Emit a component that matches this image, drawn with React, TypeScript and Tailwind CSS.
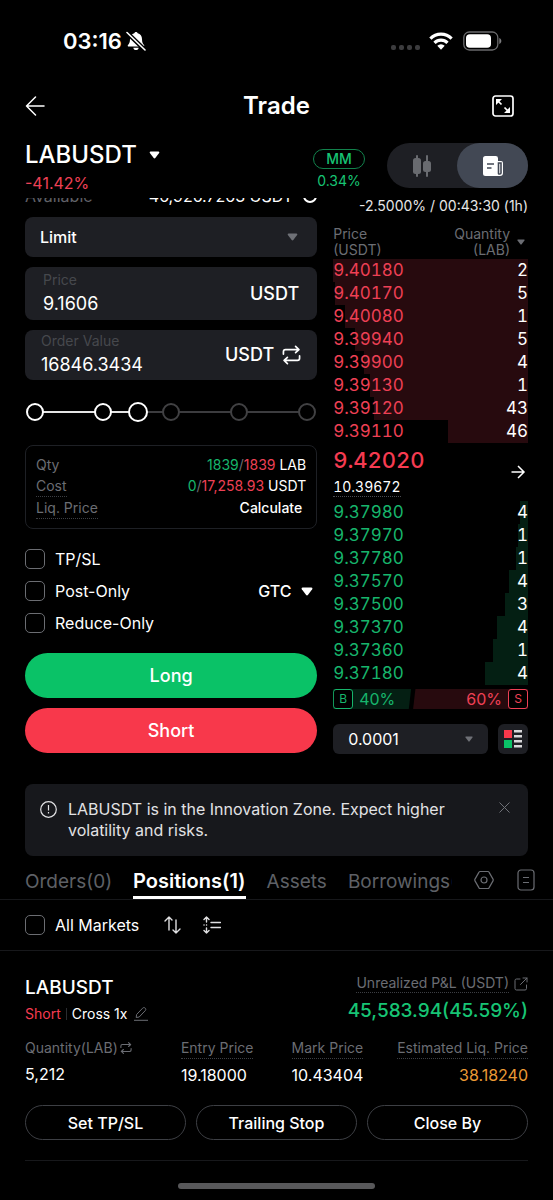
import React, { useState } from 'react';
import clsx from 'clsx';

interface Level {
  price: string;
  qty: number;
  depth: number;
}

const asks: Level[] = [
  { price: '9.40180', qty: 2, depth: 100 },
  { price: '9.40170', qty: 5, depth: 99 },
  { price: '9.40080', qty: 1, depth: 94 },
  { price: '9.39940', qty: 5, depth: 89 },
  { price: '9.39900', qty: 4, depth: 84 },
  { price: '9.39130', qty: 1, depth: 81 },
  { price: '9.39120', qty: 43, depth: 79 },
  { price: '9.39110', qty: 46, depth: 41 },
];

const bids: Level[] = [
  { price: '9.37980', qty: 4, depth: 4 },
  { price: '9.37970', qty: 1, depth: 5 },
  { price: '9.37780', qty: 1, depth: 6 },
  { price: '9.37570', qty: 4, depth: 10 },
  { price: '9.37500', qty: 3, depth: 12 },
  { price: '9.37370', qty: 4, depth: 16 },
  { price: '9.37360', qty: 1, depth: 18 },
  { price: '9.37180', qty: 4, depth: 22 },
];

const sliderStops = [0, 25, 50, 75, 100];

const Caret = ({ className }: { className?: string }) => (
  <svg viewBox="0 0 12 9" className={clsx('shrink-0 fill-current', className)} aria-hidden="true">
    <path d="M1.6.6h8.8c.9 0 1.3 1 .8 1.7L6.9 8c-.5.6-1.3.6-1.8 0L.8 2.3C.3 1.6.7.6 1.6.6z" />
  </svg>
);

const SwapIcon = ({ className }: { className?: string }) => (
  <svg viewBox="0 0 20 20" className={clsx('shrink-0', className)} fill="none" stroke="currentColor" strokeWidth="1.8" strokeLinecap="round" strokeLinejoin="round" aria-hidden="true">
    <path d="M1.5 9V6.5a2.2 2.2 0 0 1 2.2-2.2H17.5M14.3 1l3.5 3.3-3.5 3.2" />
    <path d="M18.5 11v2.5a2.2 2.2 0 0 1-2.2 2.2H2.5M5.7 12.5l-3.5 3.2L5.7 19" />
  </svg>
);

const StatusBar = () => (
  <div className="flex h-[82px] items-center justify-between pl-[63px] pr-[51px]">
    <div className="flex items-center gap-1">
      <span className="text-[22px] leading-7 font-semibold">03:16</span>
      <svg viewBox="0 0 20 20" className="size-5" aria-hidden="true">
        <path fill="#fff" d="M10 1c.9 0 1.5.6 1.7 1.3 2.7.7 4.3 2.9 4.3 5.7 0 3.5.8 4.700 2 5.900.6.700.2 1.700-.7 1.700H2.700c-.9 0-1.300-1-.7-1.700C3.200 12.700 4 11.500 4 8c0-2.800 1.600-5 4.300-5.700C8.500 1.600 9.100 1 10 1zM7.300 16.800h5.400c-.2 1.400-1.300 2.300-2.700 2.300s-2.500-.9-2.700-2.300z" />
        <path stroke="#000" strokeWidth="4.4" d="M0 0.700 20 20" />
        <path stroke="#fff" strokeWidth="1.6" strokeLinecap="round" d="M1 1.500 19 19" />
      </svg>
    </div>
    <div className="flex items-center">
      <div className="mt-3 flex gap-[3px]">
        {[0, 1, 2, 3].map((i) => (
          <span key={i} className="size-[5px] rounded-[2px] bg-[#3c3c3e]" />
        ))}
      </div>
      <svg viewBox="0 0 24 18" className="ml-[9px] h-[18px] w-6" aria-hidden="true">
        <g fill="none" stroke="#fff" strokeWidth="3.2">
          <path d="M1.400 6.600a15 15 0 0 1 21.200 0" />
          <path d="M5.500 10.800a9.200 9.200 0 0 1 13 0" />
        </g>
        <path fill="#fff" d="M8.300 13.800a5.300 5.300 0 0 1 7.400 0L12 17.700z" />
      </svg>
      <svg viewBox="0 0 39 20" className="ml-[10px] h-5 w-[39px]" aria-hidden="true">
        <rect x=".8" y="1" width="34" height="18" rx="5.5" fill="none" stroke="#6a6a6c" strokeWidth="1.3" />
        <rect x="3" y="3.2" width="25" height="13.6" rx="3.8" fill="#fff" />
        <path fill="#7d7d7f" d="M36.300 7c1.300.6 2 1.700 2 3s-.7 2.400-2 3z" />
      </svg>
    </div>
  </div>
);

const BookRow = ({ level, side }: { level: Level; side: 'ask' | 'bid' }) => (
  <li className="relative flex h-[23px] items-center justify-between">
    <span
      className={clsx('absolute inset-y-0 right-0', side === 'ask' ? 'bg-[#270a0e]' : 'bg-[#041f13]')}
      style={{ width: `${level.depth}%` }}
    />
    <span className={clsx('relative', side === 'ask' ? 'text-[#ee4055]' : 'text-[#17b56c]')}>{level.price}</span>
    <span className="relative text-white">{level.qty}</span>
  </li>
);

const CheckOption = ({ id, label }: { id: string; label: string }) => (
  <div className="flex items-center gap-[10px]">
    <input
      id={id}
      type="checkbox"
      className="size-5 shrink-0 appearance-none rounded-[5px] border border-[#6b6d72] checked:bg-[#0ac267]"
    />
    <label htmlFor={id} className="text-base leading-5">{label}</label>
  </div>
);

const OrderForm = () => {
  const [price, setPrice] = useState('9.1606');
  const [value, setValue] = useState('16846.3434');
  const [percent, setPercent] = useState(38);

  return (
    <div className="min-w-0">
      {/* Balance row, scrolled half way under the header */}
      <div className="h-[19px] overflow-hidden">
        <div className="-mt-3 flex justify-between text-base leading-5">
          <span className="text-[#606268]">Available</span>
          <span className="flex items-center gap-[10px]">
            46,926.7263 USDT
            <span className="size-[14px] rounded-full border-2 border-white" />
          </span>
        </div>
      </div>

      <div className="relative text-[#6e7076]">
        <select
          aria-label="Order type"
          className="block h-10 w-full appearance-none rounded-lg bg-[#1e1f24] px-[15px] text-base font-medium text-white"
        >
          <option>Limit</option>
          <option>Market</option>
        </select>
        <Caret className="pointer-events-none absolute top-4 right-[19px] h-2 w-[11px]" />
      </div>

      <div className="mt-[10px] flex h-[53px] items-center justify-between rounded-lg bg-[#1e1f24] px-[18px]">
        <div className="min-w-0 flex-1">
          <label htmlFor="price" className="block text-sm leading-5 text-[#46484d]">Price</label>
          <input
            id="price"
            value={price}
            onChange={(e) => setPrice(e.target.value)}
            className="block h-7 w-full bg-transparent text-lg outline-none"
          />
        </div>
        <span className="text-lg font-medium">USDT</span>
      </div>

      <div className="mt-[10px] flex h-[50px] items-center justify-between rounded-lg bg-[#1e1f24] px-4">
        <div className="min-w-0 flex-1">
          <label htmlFor="value" className="block text-sm leading-5 text-[#46484d]">Order Value</label>
          <input
            id="value"
            value={value}
            onChange={(e) => setValue(e.target.value)}
            className="block h-7 w-full bg-transparent text-lg outline-none"
          />
        </div>
        <button type="button" className="flex items-center gap-2 text-lg font-medium">
          USDT
          <SwapIcon className="h-5 w-[19px]" />
        </button>
      </div>

      <div className="relative mx-[10px] mt-[22px] flex h-5 items-center">
        <div className="h-[2px] w-full bg-[#3c3c3f]">
          <div className="h-full bg-[#e4e4e4]" style={{ width: `${percent}%` }} />
        </div>
        {sliderStops.map((stop) => (
          <span
            key={stop}
            className={clsx(
              'absolute size-[18px] -translate-x-1/2 rounded-full border-2 bg-black',
              stop <= percent ? 'border-white' : 'border-[#414143]'
            )}
            style={{ left: `${stop}%` }}
          />
        ))}
        <span
          className="absolute size-5 -translate-x-1/2 rounded-full border-2 border-white bg-black"
          style={{ left: `${percent}%` }}
        />
        <input
          type="range"
          aria-label="Order size"
          min={0}
          max={100}
          value={percent}
          onChange={(e) => setPercent(Number(e.target.value))}
          className="absolute inset-0 w-full cursor-pointer opacity-0"
        />
      </div>

      <dl className="mt-[23px] flex h-[84px] flex-col justify-between rounded-lg border border-[#1e2025] px-[10px] py-[9px] text-sm leading-5">
        <div className="flex justify-between">
          <dt className="text-[#6b6d73]">Qty</dt>
          <dd className="text-[#6b6d73]">
            <span className="text-[#17b56c]">1839</span>/<span className="text-[#ee4055]">1839</span>
            <span className="text-white"> LAB</span>
          </dd>
        </div>
        <div className="flex justify-between">
          <dt className="border-b border-dotted border-[#3c3e43] text-[#6b6d73]">Cost</dt>
          <dd className="text-[#6b6d73]">
            <span className="text-[#17b56c]">0</span>/<span className="text-[#ee4055]">17,258.93</span>
            <span className="text-white"> USDT</span>
          </dd>
        </div>
        <div className="flex justify-between">
          <dt className="border-b border-dotted border-[#3c3e43] text-[#6b6d73]">Liq. Price</dt>
          <dd className="pr-1">
            <button type="button" className="font-medium">Calculate</button>
          </dd>
        </div>
      </dl>

      <div className="mt-5 flex flex-col gap-3">
        <CheckOption id="tpsl" label="TP/SL" />
        <div className="flex items-center justify-between">
          <CheckOption id="post" label="Post-Only" />
          <div className="relative">
            <select aria-label="Time in force" className="block h-5 appearance-none pr-[25px] text-base leading-5 font-medium">
              <option>GTC</option>
              <option>IOC</option>
              <option>FOK</option>
            </select>
            <Caret className="pointer-events-none absolute top-[6px] right-1 h-[9px] w-3" />
          </div>
        </div>
        <CheckOption id="reduce" label="Reduce-Only" />
      </div>

      <button type="button" className="mt-5 block h-[45px] w-full rounded-full bg-[#0ac267] text-lg font-medium">
        Long
      </button>
      <button type="button" className="mt-[10px] block h-[45px] w-full rounded-full bg-[#f8384b] text-lg font-medium">
        Short
      </button>
    </div>
  );
};

const OrderBook = () => (
  <div className="min-w-0">
    <p className="text-right text-sm leading-4 whitespace-nowrap text-[#e6e6e6]">-2.5000% / 00:43:30 (1h)</p>

    <div className="mt-3 flex items-center justify-between text-sm leading-4 text-[#6b6d73]">
      <span>Price<br />(USDT)</span>
      <span className="flex items-center gap-[7px] text-right">
        <span>Quantity<br />(LAB)</span>
        <Caret className="mr-[3px] h-[6px] w-2" />
      </span>
    </div>

    <ul className="mt-px text-[17px] tabular-nums">
      {asks.map((level) => (
        <BookRow key={level.price} level={level} side="ask" />
      ))}
    </ul>

    <div className="flex h-[58px] items-center justify-between">
      <div className="tabular-nums">
        <div className="text-[22px] leading-7 font-medium text-[#f63b51]">9.42020</div>
        <div className="inline-block border-b border-dotted border-[#4a4c52] text-sm leading-[18px]">10.39672</div>
      </div>
      <svg viewBox="0 0 16 16" className="mr-[2px] size-4" fill="none" stroke="#fff" strokeWidth="1.5" aria-hidden="true">
        <path d="M1.500 8h12M8 2l6 6-6 6" />
      </svg>
    </div>

    <ul className="text-[17px] tabular-nums">
      {bids.map((level) => (
        <BookRow key={level.price} level={level} side="bid" />
      ))}
    </ul>

    <div className="mt-1 flex h-5 gap-[2px] text-base leading-5">
      <div className="flex w-[40%] gap-[6px] bg-[#041f13] text-[#17b56c] [clip-path:polygon(0_0,100%_0,97%_100%,0_100%)]">
        <span className="flex size-5 items-center justify-center rounded-[3px] border border-[#17b56c] bg-black text-xs">B</span>
        40%
      </div>
      <div className="flex flex-1 justify-end gap-[6px] bg-[#270a0e] text-[#ee4055] [clip-path:polygon(2%_0,100%_0,100%_100%,0_100%)]">
        60%
        <span className="flex size-5 items-center justify-center rounded-[3px] border border-[#ee4055] bg-black text-xs">S</span>
      </div>
    </div>

    <div className="mt-[15px] flex gap-[10px]">
      <div className="relative min-w-0 flex-1 text-[#6e7076]">
        <select
          aria-label="Price grouping"
          className="block h-[30px] w-full appearance-none rounded-md bg-[#1e1f24] px-[15px] text-base text-white"
        >
          <option>0.0001</option>
          <option>0.001</option>
        </select>
        <Caret className="pointer-events-none absolute top-3 right-[14px] h-[6px] w-[10px]" />
      </div>
      <button type="button" aria-label="Book layout" className="flex h-[30px] w-[30px] items-center justify-center rounded-md bg-[#1e1f24]">
        <svg viewBox="0 0 18 18" className="size-[18px]" aria-hidden="true">
          <path fill="#f8384b" d="M0 0h8v8H0z" />
          <path fill="#0ac267" d="M0 10h8v8H0z" />
          <path fill="#d8d8da" d="M10 0h8v2.500h-8zM10 5h8v2.500h-8zM10 10h8v2.500h-8zM10 15h8v2.500h-8z" />
        </svg>
      </button>
    </div>
  </div>
);

const Position = () => (
  <section className="mx-[25px] border-b border-[#17181b] pt-[23px] pb-5">
    <div className="flex justify-between">
      <div>
        <h2 className="text-[19px] leading-7 font-medium">LABUSDT</h2>
        <div className="flex items-center text-sm leading-6">
          <span className="text-[#f63b51]">Short</span>
          <span className="mx-[5px] h-3 w-px bg-[#2a2c30]" />
          <span>Cross 1x</span>
          <button type="button" aria-label="Adjust leverage" className="ml-[7px]">
            <svg viewBox="0 0 14 14" className="size-[14px]" fill="none" stroke="#6b6d73" strokeLinejoin="round" aria-hidden="true">
              <path d="M2.200 10.500l.4-3 6-6.300c.8-.8 1.800-.8 2.600-.1.800.8.8 1.800 0 2.600L5.200 10z" />
              <path d="M0 13.300h14" />
            </svg>
          </button>
        </div>
      </div>
      <div className="flex flex-col items-end">
        <div className="flex items-center gap-[5px] text-sm text-[#6b6d73]">
          <span className="border-b border-dotted border-[#3c3e43] leading-[18px]">Unrealized P&amp;L (USDT)</span>
          <svg viewBox="0 0 14 14" className="size-[14px]" fill="none" stroke="currentColor" strokeLinecap="round" strokeLinejoin="round" aria-hidden="true">
            <path d="M6 2H2.500A1.500 1.500 0 0 0 1 3.500v8A1.500 1.500 0 0 0 2.500 13h8.500a1.500 1.500 0 0 0 1.500-1.500V8M9 1h4v4M13 1 6.500 7.500" />
          </svg>
        </div>
        <div className="mt-1 text-[19px] leading-7 font-medium text-[#17c474]">45,583.94(45.59%)</div>
      </div>
    </div>

    <dl className="mt-3 grid grid-cols-[31%_22%_1fr_auto]">
      <div>
        <dt className="flex items-center gap-[2px] text-sm leading-5 text-[#6b6d73]">
          Quantity(LAB)
          <SwapIcon className="size-3" />
        </dt>
        <dd className="mt-1 text-base leading-6">5,212</dd>
      </div>
      <div className="justify-self-start">
        <dt className="border-b border-dotted border-[#3c3e43] text-sm leading-5 text-[#6b6d73]">Entry Price</dt>
        <dd className="mt-1 text-base leading-6">19.18000</dd>
      </div>
      <div className="justify-self-start">
        <dt className="border-b border-dotted border-[#3c3e43] text-sm leading-5 text-[#6b6d73]">Mark Price</dt>
        <dd className="mt-1 text-base leading-6">10.43404</dd>
      </div>
      <div className="text-right">
        <dt className="border-b border-dotted border-[#3c3e43] text-sm leading-5 text-[#6b6d73]">Estimated Liq. Price</dt>
        <dd className="mt-1 text-base leading-6 text-[#eb9a35]">38.18240</dd>
      </div>
    </dl>

    <div className="mt-[18px] grid grid-cols-3 gap-[10px]">
      {['Set TP/SL', 'Trailing Stop', 'Close By'].map((action) => (
        <button key={action} type="button" className="h-[35px] rounded-full border border-[#3d3f44] text-base font-medium">
          {action}
        </button>
      ))}
    </div>
  </section>
);

const App: React.FC = () => {
  return (
    <main className="min-h-screen overflow-hidden bg-black font-['Inter',sans-serif] text-white">
      <StatusBar />

      <header className="grid grid-cols-3 items-center px-[25px]">
        <button type="button" aria-label="Back" className="justify-self-start">
          <svg viewBox="0 0 20 20" className="size-5" fill="none" stroke="#fff" strokeWidth="1.5" strokeLinecap="round" strokeLinejoin="round" aria-hidden="true">
            <path d="M19 10H1.500M10.500 1 1.500 10l9 9" />
          </svg>
        </button>
        <h1 className="text-center text-2xl leading-[47px] font-semibold">Trade</h1>
        <button type="button" aria-label="Full screen" className="mr-[14px] justify-self-end">
          <svg viewBox="0 0 22 22" className="size-[22px]" fill="none" stroke="#fff" strokeWidth="1.7" aria-hidden="true">
            <rect x="1" y="1" width="20" height="20" rx="2.5" />
            <path d="M5 5l4.500 4.500M17 17l-4.500-4.500" />
            <path fill="#fff" stroke="none" d="M4 4h6L4 10zM18 18h-6l6-6z" />
          </svg>
        </button>
      </header>

      <div className="mt-[11px] flex items-start justify-between px-[25px]">
        <div>
          <button type="button" className="flex items-center gap-3 text-2xl leading-[30px] font-medium">
            LABUSDT
            <Caret className="h-2 w-[11px]" />
          </button>
          <div className="h-[28px] text-base leading-[26px] text-[#ee4055]">-41.42%</div>
        </div>
        <div className="flex items-start gap-[22px] pt-[3px]">
          <div className="mt-[6px] flex flex-col items-center">
            <span className="flex h-5 w-[52px] items-center justify-center rounded-full border border-[#12824c] text-sm font-medium text-[#17c474]">MM</span>
            <span className="text-sm leading-[23px] text-[#17c474]">0.34%</span>
          </div>
          <div className="flex rounded-full bg-[#1e1f24]">
            <button type="button" aria-label="Chart" className="flex h-[45px] w-[70px] items-center justify-center">
              <svg viewBox="0 0 18 22" className="h-[22px] w-[18px]" fill="#696b70" aria-hidden="true">
                <rect x="0" y="3" width="8" height="16" rx="2.5" />
                <rect x="3" y="0" width="2" height="22" rx="1" />
                <rect x="10" y="6" width="8" height="11" rx="2.5" />
                <rect x="13" y="0" width="2" height="22" rx="1" />
              </svg>
            </button>
            <button type="button" aria-label="Trade panel" className="flex h-[45px] w-[71px] items-center justify-center rounded-full bg-[#424854]">
              <svg viewBox="0 0 20 20" className="size-5" aria-hidden="true">
                <path fill="#fff" d="M2.500 0h10.200A2.300 2.300 0 0 1 15 2.300V5h3a2 2 0 0 1 2 2v10a3 3 0 0 1-3 3H2.500A2.500 2.500 0 0 1 0 17.500v-15A2.500 2.500 0 0 1 2.500 0z" />
                <path fill="none" stroke="#424854" strokeWidth="1.6" d="M4 8h7M4 12h4.500M15.500 7v10.500c0 .8 2.500.8 2.500-.5V7z" />
              </svg>
            </button>
          </div>
        </div>
      </div>

      <div className="grid grid-cols-[3fr_2fr] gap-4 px-[25px]">
        <OrderForm />
        <OrderBook />
      </div>

      <div role="status" className="mx-[25px] mt-[30px] flex items-start rounded-lg bg-[#17181c] px-[15px] py-[15px]">
        <svg viewBox="0 0 17 17" className="mt-[2px] size-[17px] shrink-0" fill="none" stroke="#e2e2e4" strokeWidth="1.2" aria-hidden="true">
          <circle cx="8.5" cy="8.5" r="7.8" />
          <path d="M8.500 4v5.500M8.500 11v1.600" />
        </svg>
        <p className="mx-[11px] flex-1 text-base leading-[21px] text-[#e2e2e4]">
          LABUSDT is in the Innovation Zone. Expect higher volatility and risks.
        </p>
        <button type="button" aria-label="Dismiss" className="mt-[3px] mr-[3px]">
          <svg viewBox="0 0 11 11" className="size-[11px]" stroke="#707278" aria-hidden="true">
            <path d="M.5.5l10 10M10.500.5l-10 10" />
          </svg>
        </button>
      </div>

      <div className="mt-[5px] flex items-center border-b border-[#17181b] pr-[18px] pl-[25px]">
        <nav className="flex min-w-0 flex-1 gap-[21px] overflow-hidden text-[19px] text-[#5e6066]">
          <a href="#orders" className="pt-[5px] leading-8">Orders(0)</a>
          <a href="#positions" aria-current="page" className="border-b-3 border-white pt-[5px] text-xl leading-[30px] font-semibold text-white">Positions(1)</a>
          <a href="#assets" className="pt-[5px] leading-8">Assets</a>
          <a href="#borrowings" className="pt-[5px] leading-8">Borrowings(0)</a>
        </nav>
        <button type="button" aria-label="Settings" className="ml-[22px]">
          <svg viewBox="0 0 20 20" className="size-5" fill="none" stroke="#6b6d73" strokeWidth="1.2" strokeLinejoin="round" aria-hidden="true">
            <path d="M6 1.500h8c.5 0 .8.2 1 .6l4 7c.3.600.3 1.200 0 1.800l-4 7c-.2.400-.5.600-1 .6H6c-.5 0-.8-.2-1-.6l-4-7c-.3-.6-.3-1.200 0-1.800l4-7c.2-.4.5-.6 1-.6z" />
            <circle cx="10" cy="10" r="3" />
          </svg>
        </button>
        <button type="button" aria-label="History" className="ml-[23px]">
          <svg viewBox="0 0 18 22" className="h-[22px] w-[18px]" fill="none" stroke="#6b6d73" strokeWidth="1.2" aria-hidden="true">
            <rect x="1" y="1" width="16" height="20" rx="3" />
            <path d="M6 8.500h6M6 13.500h6" />
          </svg>
        </button>
      </div>

      <div className="flex h-[51px] items-center border-b border-[#17181b] px-[25px]">
        <CheckOption id="markets" label="All Markets" />
        <button type="button" aria-label="Sort" className="ml-[25px]">
          <svg viewBox="0 0 17 18" className="h-[18px] w-[17px]" fill="none" stroke="#e0e0e2" strokeWidth="1.4" strokeLinecap="round" strokeLinejoin="round" aria-hidden="true">
            <path d="M5 14V1M1 5l4-4 3 3M12 4v13M9 14l3 3 4-4" />
          </svg>
        </button>
        <button type="button" aria-label="Density" className="ml-[22px]">
          <svg viewBox="0 0 18 18" className="size-[18px]" fill="none" stroke="#e0e0e2" strokeWidth="1.4" strokeLinecap="round" strokeLinejoin="round" aria-hidden="true">
            <path d="M3.500 6V1M1 3.500 3.500 1 6 3.500M3.500 12v5M1 14.500 3.500 17 6 14.500M8 6.500h9.500M8 11.500h9.500M1 9h.1M3.500 9h.1" />
          </svg>
        </button>
      </div>

      <Position />

      <div className="mx-auto mt-[22px] mb-[10px] h-[6px] w-[197px] rounded-full bg-[#58585a]" />
    </main>
  );
};

export default App;
